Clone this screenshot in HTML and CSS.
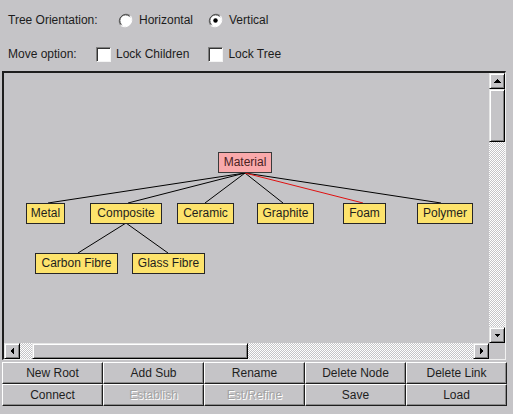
FILE: index.html
```html
<!doctype html>
<html>
<head>
<meta charset="UTF-8">
<meta name="viewport" content="width=device-width,initial-scale=1">
<title>Tree editor</title>
<link rel="stylesheet" href="styles.css">
</head>
<body>
<div class="options">
	<div class="row orient">
		<span class="opt_label">Tree Orientation:</span>
		<label class="choice">
			<svg class="radio" width="15" height="15" viewBox="0 0 15 15">
				<circle cx="7.5" cy="7.5" r="6" fill="#fff"/>
				<path d="M2.6 12.4 A7 7 0 0 1 12.4 2.6" fill="none" stroke="#808080"/>
				<path d="M3.4 11.6 A5.8 5.8 0 0 1 11.6 3.4" fill="none" stroke="#333"/>
				<path d="M12.4 2.6 A7 7 0 0 1 2.6 12.4" fill="none" stroke="#fff"/>
			</svg>
			Horizontal
		</label>
		<label class="choice">
			<svg class="radio" width="15" height="15" viewBox="0 0 15 15">
				<circle cx="7.5" cy="7.5" r="6" fill="#fff"/>
				<path d="M2.6 12.4 A7 7 0 0 1 12.4 2.6" fill="none" stroke="#808080"/>
				<path d="M3.4 11.6 A5.8 5.8 0 0 1 11.6 3.4" fill="none" stroke="#333"/>
				<path d="M12.4 2.6 A7 7 0 0 1 2.6 12.4" fill="none" stroke="#fff"/>
				<circle cx="7.5" cy="7.5" r="2.2" fill="#000"/>
			</svg>
			Vertical
		</label>
	</div>
	<div class="row move">
		<span class="opt_label">Move option:</span>
		<label class="choice"><span class="check"></span>Lock Children</label>
		<label class="choice"><span class="check"></span>Lock Tree</label>
	</div>
</div>

<div class="pane">
	<div class="view">
		<svg class="links" width="485" height="270">
			<g stroke="#000" stroke-width="1">
				<line x1="241" y1="100" x2="44" y2="130"/>
				<line x1="241" y1="100" x2="124" y2="130"/>
				<line x1="241" y1="100" x2="201" y2="130"/>
				<line x1="241" y1="100" x2="279" y2="130"/>
				<line x1="241" y1="100" x2="437" y2="130"/>
				<line x1="122" y1="150" x2="74" y2="180"/>
				<line x1="122" y1="150" x2="164" y2="180"/>
			</g>
			<line x1="241" y1="100" x2="359" y2="130" stroke="#e01010" stroke-width="1"/>
		</svg>
		<div class="node root n_material">Material</div>
		<div class="node n_metal">Metal</div>
		<div class="node n_composite">Composite</div>
		<div class="node n_ceramic">Ceramic</div>
		<div class="node n_graphite">Graphite</div>
		<div class="node n_foam">Foam</div>
		<div class="node n_polymer">Polymer</div>
		<div class="node n_carbon">Carbon Fibre</div>
		<div class="node n_glass">Glass Fibre</div>
	</div>

	<div class="vbar">
		<span class="arrow">
			<svg width="14" height="14" viewBox="0 0 14 14"><polygon points="3.5,8.5 10.5,8.5 7,5" fill="#000"/></svg>
		</span>
		<span class="thumb_v"></span>
		<span class="track"></span>
		<span class="arrow">
			<svg width="14" height="14" viewBox="0 0 14 14"><polygon points="3.5,5.5 10.5,5.5 7,9" fill="#000"/></svg>
		</span>
	</div>

	<div class="hbar">
		<span class="arrow">
			<svg width="14" height="14" viewBox="0 0 14 14"><polygon points="8.5,3.5 8.5,10.5 5,7" fill="#000"/></svg>
		</span>
		<span class="track track_lead"></span>
		<span class="thumb_h"></span>
		<span class="track"></span>
		<span class="arrow">
			<svg width="14" height="14" viewBox="0 0 14 14"><polygon points="5.5,3.5 5.5,10.5 9,7" fill="#000"/></svg>
		</span>
	</div>
	<div class="corner"></div>
</div>

<div class="buttons">
	<button type="button" class="btn">New Root</button>
	<button type="button" class="btn">Add Sub</button>
	<button type="button" class="btn">Rename</button>
	<button type="button" class="btn">Delete Node</button>
	<button type="button" class="btn">Delete Link</button>
	<button type="button" class="btn">Connect</button>
	<button type="button" class="btn" disabled>Establish</button>
	<button type="button" class="btn" disabled>Est/Refine</button>
	<button type="button" class="btn">Save</button>
	<button type="button" class="btn">Load</button>
</div>
</body>
</html>
```

FILE: styles.css
```css
body {
	margin: 0;
	width: 513px;
	height: 414px;
	overflow: hidden;
	background: #c5c4c7;
	font-family: "Liberation Sans", Arial, sans-serif;
	font-size: 12px;
	color: #1c1c1c;
}

/* option rows */
.options {
	padding-top: 3px;
}
.row {
	display: flex;
	align-items: center;
	height: 34px;
	padding-left: 8px;
}
.orient .opt_label {
	width: 110px;
}
.move .opt_label {
	width: 88px;
}
.choice {
	display: flex;
	align-items: center;
}
.orient .choice {
	gap: 6px;
	margin-right: 15px;
}
.move .choice {
	gap: 5px;
	margin-right: 19px;
}
.radio {
	display: block;
}
.check {
	width: 15px;
	height: 15px;
	box-sizing: border-box;
	background: #fff;
	border: 1px solid;
	border-color: #808080 #f4f4f4 #f4f4f4 #808080;
	box-shadow: inset 1px 1px #333;
}

/* scroll pane */
.pane {
	margin-left: 2px;
	width: 504px;
	height: 289px;
	box-sizing: border-box;
	border-style: solid;
	border-width: 2px 1px 1px 2px;
	border-color: #1e1e1e #f0f0f0 #f0f0f0 #1e1e1e;
	display: grid;
	grid-template-columns: 1fr 16px;
	grid-template-rows: 1fr 16px;
}
.view {
	position: relative;
	overflow: hidden;
}
.links {
	position: absolute;
	left: 0;
	top: 0;
}
.node {
	position: absolute;
	top: 130px;
	height: 21px;
	box-sizing: border-box;
	border: 1px solid #262626;
	background: #fde36c;
	text-align: center;
	line-height: 19px;
	white-space: nowrap;
	color: #1e1e1e;
}
.root {
	background: #f9a9ab;
	color: #4a2222;
	border-color: #3a3a3a;
}
.n_material { left: 214px; top: 79px; width: 54px; }
.n_metal { left: 22px; width: 39px; }
.n_composite { left: 86px; width: 72px; }
.n_ceramic { left: 173px; width: 57px; }
.n_graphite { left: 253px; width: 57px; }
.n_foam { left: 339px; width: 43px; }
.n_polymer { left: 413px; width: 56px; }
.n_carbon { left: 31px; top: 180px; width: 83px; }
.n_glass { left: 128px; top: 180px; width: 73px; }

/* scrollbars */
.vbar, .hbar {
	display: flex;
}
.vbar {
	flex-direction: column;
}
.arrow, .thumb_v, .thumb_h {
	flex: none;
	box-sizing: border-box;
	background: #c5c4c7;
	border: 1px solid;
	border-color: #e6e6e6 #000 #000 #e6e6e6;
	box-shadow: inset 1px 1px #fff, inset -1px -1px #808080;
}
.arrow {
	width: 16px;
	height: 16px;
}
.arrow svg {
	display: block;
	margin: 0;
	shape-rendering: crispEdges;
}
.thumb_v {
	height: 53px;
}
.thumb_h {
	width: 216px;
}
.track {
	flex: 1;
	background: repeating-conic-gradient(#fff 0 25%, #c5c4c7 0 50%) 0 0 / 2px 2px;
}
.hbar .track_lead {
	flex: none;
	width: 12px;
}
.corner {
	background: #c5c4c7;
}

/* buttons */
.buttons {
	display: grid;
	grid-template-columns: repeat(5, 101px);
	grid-auto-rows: 22px;
	margin: 2px 0 0 2px;
}
.btn {
	font: inherit;
	color: #1e1e1e;
	padding: 0;
	background: #c5c4c7;
	border: 1px solid;
	border-color: #fff #1e1e1e #1e1e1e #fff;
	box-shadow: inset -1px -1px #8c8c8c;
}
.btn:disabled {
	color: #a3a3a3;
	text-shadow: 1px 1px #fff;
}
```
